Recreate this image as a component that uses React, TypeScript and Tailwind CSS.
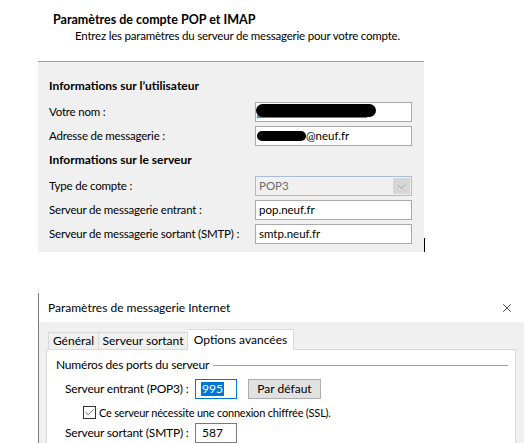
import { Check, X } from 'lucide-react';

const font = { fontFamily: 'Lato, "Noto Sans", sans-serif' };

function Field({ label, children }: { label: string; children: React.ReactNode }) {
  return (
    <div className="flex items-center h-[24px] shrink-0">
      <span className="w-[217px] pl-[11px] whitespace-nowrap text-[11.5px] tracking-[-0.2px] leading-none text-black">
        {label}
      </span>
      {children}
    </div>
  );
}

function TextBox({ children, className = '' }: { children?: React.ReactNode; className?: string }) {
  return (
    <div
      className={`w-[157px] h-[20px] border border-[#a9a9a9] bg-white flex items-center pl-[3px] text-[11.5px] leading-none text-black ${className}`}
    >
      {children}
    </div>
  );
}

export default function App() {
  return (
    <div className="w-[524px] h-[443px] overflow-hidden bg-white flex flex-col" style={font}>
      {/* en-tête */}
      <div className="pt-[13px] h-[61px] shrink-0">
        <p className="pl-[53px] text-[12.5px] font-bold leading-[14px] text-black whitespace-nowrap">
          Paramètres de compte POP et IMAP
        </p>
        <p className="pl-[75px] mt-[2px] text-[11.5px] tracking-[-0.2px] leading-[14px] text-black whitespace-nowrap">
          Entrez les paramètres du serveur de messagerie pour votre compte.
        </p>
      </div>

      {/* panneau gris */}
      <div className="flex shrink-0">
        <div className="ml-[38px] w-[386px] h-[191px] border-t border-[#a0a0a0] bg-[#f0f0f0] flex flex-col pt-[17px]">
          <p className="pl-[11px] text-[12px] font-bold leading-[14px] text-black h-[14px] shrink-0">
            Informations sur l’utilisateur
          </p>
          <div className="mt-[7px] shrink-0">
            <Field label="Votre nom :">
              <TextBox className="relative">
                <span className="absolute left-[1px] top-[12px] w-[110px] h-[3px] bg-[#3b8ad8]" />
                <span className="absolute left-0 top-[1px] w-[120px] h-[13px] rounded-full bg-black" />
              </TextBox>
            </Field>
            <Field label="Adresse de messagerie :">
              <TextBox>
                <span className="w-[49px] h-[10px] rounded-full bg-black -ml-[2px]" />
                <span>@neuf.fr</span>
              </TextBox>
            </Field>
          </div>
          <p className="pl-[11px] mt-[5px] text-[12px] font-bold leading-[14px] text-black h-[14px] shrink-0">
            Informations sur le serveur
          </p>
          <div className="mt-[7px] shrink-0">
            <Field label="Type de compte :">
              <div className="w-[157px] h-[20px] border border-[#a9bdd4] bg-[#f0f0f0] flex items-center">
                <span className="flex-1 pl-[3px] text-[11.5px] leading-none text-[#6d6d6d]">POP3</span>
                <span className="w-[17px] h-[16px] mr-[1px] bg-[#d6d6d6] flex items-center justify-center">
                  <svg width="9" height="5" viewBox="0 0 9 5">
                    <path d="M0.5 0.5 L4.5 4.5 L8.5 0.5" fill="none" stroke="#a8a8a8" strokeWidth="1" />
                  </svg>
                </span>
              </div>
            </Field>
            <Field label="Serveur de messagerie entrant :">
              <TextBox>pop.neuf.fr</TextBox>
            </Field>
            <Field label="Serveur de messagerie sortant (SMTP) :">
              <TextBox>smtp.neuf.fr</TextBox>
            </Field>
          </div>
        </div>
        <div className="self-end w-[1px] h-[14px] bg-black" />
      </div>

      {/* fenêtre Paramètres de messagerie Internet */}
      <div className="mt-[41px] ml-[38px] flex-1 min-h-0 border-l border-[#7a7a7a] flex flex-col">
        <div className="h-[29px] shrink-0 flex items-center justify-between pl-[9px] pr-[10px]">
          <span className="text-[12px] leading-none text-black whitespace-nowrap">Paramètres de messagerie Internet</span>
          <X size={14} strokeWidth={1.2} className="text-black" />
        </div>
        <div className="flex-1 bg-[#f0f0f0] pt-[7px] flex flex-col">
          <div className="flex items-end pl-[9px] h-[20px] shrink-0">
            <div className="w-[51px] h-[17px] border border-b-0 border-[#d9d9d9] flex items-center justify-center text-[12px] leading-none text-black">
              Général
            </div>
            <div className="w-[89px] h-[17px] border border-b-0 border-l-0 border-[#d9d9d9] flex items-center justify-center text-[12px] leading-none text-black">
              Serveur sortant
            </div>
            <div className="w-[106px] h-[21px] border border-b-0 border-l-0 border-[#d9d9d9] bg-white flex justify-center pt-[4px] text-[12px] leading-none text-black relative top-[1px]">
              Options avancées
            </div>
          </div>
          <div className="flex-1 ml-[7px] mr-[8px] bg-white border border-b-0 border-[#d9d9d9] pl-[9px] pt-[8px]">
            <div className="flex items-center gap-[4px] pr-[7px] h-[14px]">
              <span className="text-[12px] tracking-[-0.2px] leading-none text-black whitespace-nowrap">
                Numéros des ports du serveur
              </span>
              <span className="flex-1 h-[1px] bg-[#a0a0a0]" />
            </div>
            <div className="flex items-center mt-[7px] pl-[9px]">
              <span className="w-[130px] whitespace-nowrap text-[12px] tracking-[-0.2px] leading-none text-black">
                Serveur entrant (POP3) :
              </span>
              <div className="w-[42px] h-[20px] border border-[#0078d7] bg-white flex items-center pl-[5px]">
                <span className="bg-[#0078d7] text-white text-[12px] leading-[14px] px-[1px]">995</span>
              </div>
              <button className="ml-[11px] w-[73px] h-[20px] bg-[#e1e1e1] border border-[#adadad] text-[12px] leading-none text-black">
                Par défaut
              </button>
            </div>
            <div className="flex items-center mt-[7px] pl-[27px]">
              <span className="w-[13px] h-[13px] border border-[#333] bg-white flex items-center justify-center">
                <Check size={11} strokeWidth={1.6} className="text-[#333]" />
              </span>
              <span className="ml-[3px] whitespace-nowrap text-[11px] tracking-[-0.2px] leading-none text-black">
                Ce serveur nécessite une connexion chiffrée (SSL).
              </span>
            </div>
            <div className="flex items-center mt-[4px] pl-[9px]">
              <span className="w-[130px] whitespace-nowrap text-[12px] tracking-[-0.2px] leading-none text-black">
                Serveur sortant (SMTP) :
              </span>
              <div className="w-[42px] h-[20px] border border-[#7a7a7a] bg-white flex items-center pl-[6px] text-[12px] leading-none text-black">
                587
              </div>
            </div>
          </div>
        </div>
      </div>
    </div>
  );
}
